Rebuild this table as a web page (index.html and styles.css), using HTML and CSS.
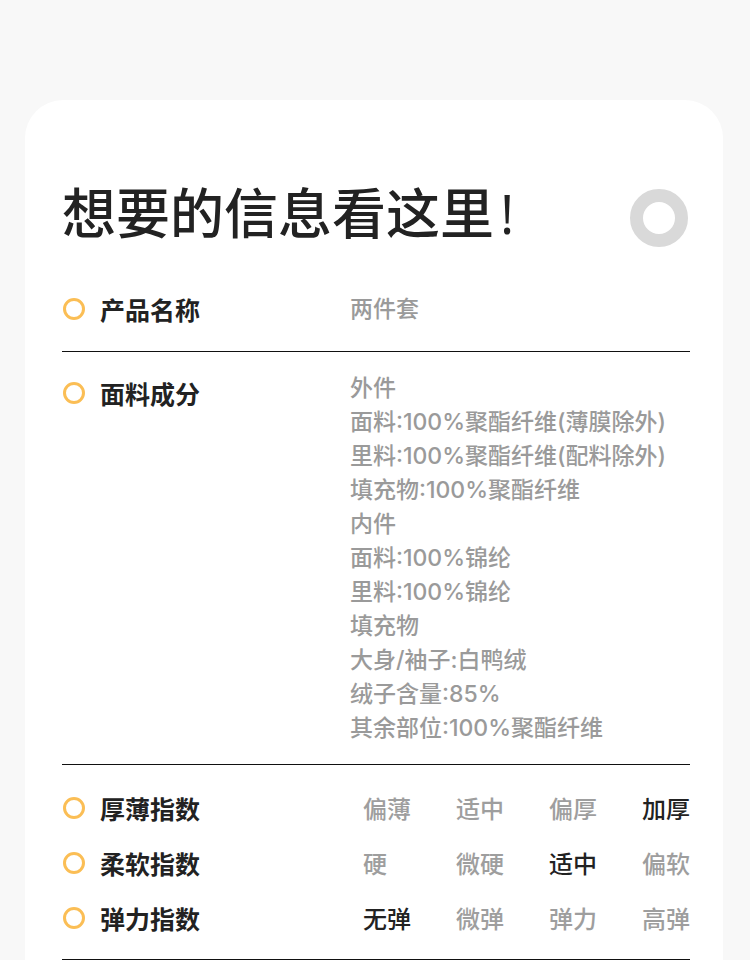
FILE: index.html
```html
<!DOCTYPE html>
<html lang="zh-CN">
<head>
<meta charset="utf-8">
<title>想要的信息看这里</title>
<link rel="stylesheet" href="styles.css">
</head>
<body>
<div class="card">
  <div class="head">
    <h1 class="title">想要的信息看这里<span class="bang">!</span></h1>
    <span class="ring-gray"></span>
  </div>

  <div class="row row-center">
    <div class="label"><span class="dot"></span><span>产品名称</span></div>
    <div class="value">两件套</div>
  </div>

  <div class="row">
    <div class="label label-top"><span class="dot"></span><span>面料成分</span></div>
    <div class="value">
      <div>外件</div>
      <div>面料:100%聚酯纤维(薄膜除外)</div>
      <div>里料:100%聚酯纤维(配料除外)</div>
      <div>填充物:100%聚酯纤维</div>
      <div>内件</div>
      <div>面料:100%锦纶</div>
      <div>里料:100%锦纶</div>
      <div>填充物</div>
      <div>大身/袖子:白鸭绒</div>
      <div>绒子含量:85%</div>
      <div>其余部位:100%聚酯纤维</div>
    </div>
  </div>

  <div class="index-block">
    <div class="index-row">
      <div class="label"><span class="dot"></span><span>厚薄指数</span></div>
      <div class="opts">
        <span>偏薄</span><span>适中</span><span>偏厚</span><span class="on">加厚</span>
      </div>
    </div>
    <div class="index-row">
      <div class="label"><span class="dot"></span><span>柔软指数</span></div>
      <div class="opts">
        <span>硬</span><span>微硬</span><span class="on">适中</span><span>偏软</span>
      </div>
    </div>
    <div class="index-row">
      <div class="label"><span class="dot"></span><span>弹力指数</span></div>
      <div class="opts">
        <span class="on">无弹</span><span>微弹</span><span>弹力</span><span>高弹</span>
      </div>
    </div>
  </div>
</div>
</body>
</html>
```

FILE: styles.css
```css
html, body {
  margin: 0;
  padding: 0;
  background: #f8f8f8;
}
body {
  font-family: "Noto Sans CJK SC", "Noto Sans", sans-serif;
  color: #222;
  height: 960px;
  overflow: hidden;
}
.card {
  margin: 100px 0 0 25px;
  width: 698px;
  min-height: 900px;
  background: #fff;
  border-radius: 38px 38px 0 0;
  padding: 82px 33px 0 37px;
  box-sizing: border-box;
}
.head {
  display: flex;
  justify-content: space-between;
  align-items: center;
  height: 60px;
}
.title {
  margin: 0;
  font-size: 54px;
  line-height: 60px;
  font-weight: 500;
  color: #222;
}
.bang {
  font-family: "Open Sans", "Noto Sans CJK SC", sans-serif;
  font-weight: 400;
  margin-left: 6px;
}
.ring-gray {
  width: 58px;
  height: 58px;
  box-sizing: border-box;
  border: 13px solid #d9d9d9;
  border-radius: 50%;
  margin-top: 12px;
  margin-right: 2px;
}
.row {
  display: grid;
  grid-template-columns: 288px 1fr;
  align-items: start;
  border-bottom: 1px solid #111;
  padding: 19px 0 19px;
}
.row-center {
  margin-top: 50px;
  padding-top: 0;
  padding-bottom: 25px;
  align-items: center;
}
.label {
  display: flex;
  align-items: center;
  gap: 15px;
  font-size: 25px;
  line-height: 34px;
  font-weight: 700;
  color: #222;
}
.label-top {
  margin-top: 5px;
}
.dot {
  width: 22px;
  height: 22px;
  box-sizing: border-box;
  border: 3.5px solid #fbbe55;
  border-radius: 50%;
  margin-left: 1px;
  flex: none;
}
.value {
  font-family: "Inter", "Noto Sans CJK SC", sans-serif;
  font-size: 23px;
  line-height: 34px;
  font-weight: 500;
  color: #9a9a9a;
}
.index-block {
  padding: 15px 0 14px;
  border-bottom: 1px solid #111;
}
.index-row {
  display: flex;
  align-items: center;
  justify-content: space-between;
  height: 55px;
}
.opts {
  display: grid;
  grid-template-columns: repeat(4, 48px);
  column-gap: 45px;
  font-size: 24px;
  line-height: 34px;
  font-weight: 500;
  color: #9e9e9e;
}
.opts .on {
  color: #222;
}
```
